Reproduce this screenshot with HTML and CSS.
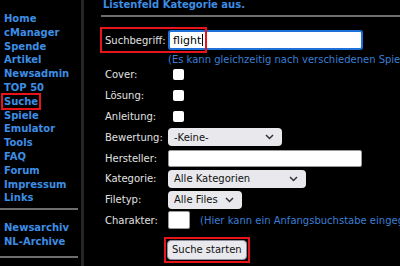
FILE: index.html
```html
<!DOCTYPE html>
<html lang="de">
<head>
    <meta charset="UTF-8">
    <title>Suche</title>
    <link rel="stylesheet" href="styles.css">
</head>
<body>
    <div class="page">
        <div class="nav">
            <ul class="menu">
                <li><a href="#">Home</a></li>
                <li><a href="#">cManager</a></li>
                <li><a href="#">Spende</a></li>
                <li><a href="#">Artikel</a></li>
                <li><a href="#">Newsadmin</a></li>
                <li><a href="#">TOP 50</a></li>
                <li><a href="#" class="mark">Suche</a></li>
                <li><a href="#">Spiele</a></li>
                <li><a href="#">Emulator</a></li>
                <li><a href="#">Tools</a></li>
                <li><a href="#">FAQ</a></li>
                <li><a href="#">Forum</a></li>
                <li><a href="#">Impressum</a></li>
                <li><a href="#">Links</a></li>
            </ul>
            <hr class="nav-line">
            <ul class="menu menu-last">
                <li><a href="#">Newsarchiv</a></li>
                <li><a href="#">NL-Archive</a></li>
            </ul>
            <hr class="nav-line">
        </div>
        <div class="sep"></div>
        <div class="main">
            <p class="intro">Listenfeld Kategorie aus.</p>
            <hr class="main-line">
            <form class="search" onsubmit="return false">
                <label class="lbl" for="q">Suchbegriff:</label>
                <div class="field">
                    <span class="hilite-q"></span>
                    <div class="text-focus" id="q">flight<span class="caret"></span></div>
                </div>

                <div></div>
                <div class="hint hint-q">(Es kann gleichzeitig nach verschiedenen Spielen gesucht werden)</div>

                <label class="lbl" for="cover">Cover:</label>
                <div class="field"><input type="checkbox" id="cover"></div>

                <label class="lbl" for="loesung">Lösung:</label>
                <div class="field"><input type="checkbox" id="loesung"></div>

                <label class="lbl" for="anleitung">Anleitung:</label>
                <div class="field"><input type="checkbox" id="anleitung"></div>

                <label class="lbl" for="bewertung">Bewertung:</label>
                <div class="field">
                    <div class="select w-bew">
                        <select id="bewertung"><option>-Keine-</option></select>
                        <svg width="9" height="6" viewBox="0 0 9 6"><path d="M1 1l3.5 3.5L8 1" fill="none" stroke="#333" stroke-width="1.5"/></svg>
                    </div>
                </div>

                <label class="lbl" for="hersteller">Hersteller:</label>
                <div class="field"><input type="text" class="text w-long" id="hersteller"></div>

                <label class="lbl" for="kategorie">Kategorie:</label>
                <div class="field">
                    <div class="select w-kat">
                        <select id="kategorie"><option>Alle Kategorien</option></select>
                        <svg width="9" height="6" viewBox="0 0 9 6"><path d="M1 1l3.5 3.5L8 1" fill="none" stroke="#333" stroke-width="1.5"/></svg>
                    </div>
                </div>

                <label class="lbl" for="filetyp">Filetyp:</label>
                <div class="field">
                    <div class="select w-file">
                        <select id="filetyp"><option>Alle Files</option></select>
                        <svg width="9" height="6" viewBox="0 0 9 6"><path d="M1 1l3.5 3.5L8 1" fill="none" stroke="#333" stroke-width="1.5"/></svg>
                    </div>
                </div>

                <label class="lbl" for="charakter">Charakter:</label>
                <div class="field">
                    <input type="text" class="text w-char" id="charakter">
                    <span class="hint hint-char">(Hier kann ein Anfangsbuchstabe eingegeben werden)</span>
                </div>

                <div></div>
                <div class="field submit-row">
                    <span class="hilite-btn"><button type="submit">Suche starten</button></span>
                </div>
            </form>
        </div>
    </div>
</body>
</html>
```

FILE: styles.css
```css
body {
    margin: 0;
    background-color: #000;
    font-family: "DejaVu Sans", Verdana, sans-serif;
    font-size: 10px;
    overflow: hidden;
}
.page {
    display: flex;
    min-height: 266px;
}
.nav {
    width: 78px;
    padding-top: 12px;
    flex-shrink: 0;
}
.menu {
    list-style: none;
    margin: 0;
    padding: 0 0 0 4px;
}
.menu-last {
    margin-bottom: 7px;
}
.menu li {
    line-height: 13.8px;
}
.menu a {
    color: #3d8ee4;
    font-weight: bold;
    text-decoration: none;
}
.menu a.mark {
    outline: 2px solid #e8141b;
    outline-offset: 1px;
}
.nav-line {
    border: none;
    border-top: 2px solid #6e6e6e;
    margin: 3px 0 11px 0;
}
.sep {
    width: 3px;
    background-color: #262626;
    margin-left: 3px;
    flex-shrink: 0;
}
.main {
    flex: 1;
    padding-left: 21px;
    white-space: nowrap;
    overflow: hidden;
}
.intro {
    margin: -1px 0 0 -2px;
    color: #3d8ee4;
    font-weight: bold;
    line-height: 12px;
}
.main-line {
    border: none;
    border-top: 2px solid #6e6e6e;
    margin: 4px 0 0 -4px;
}
.search {
    display: grid;
    grid-template-columns: 63px auto;
    grid-template-rows: 20px 14.5px;
    grid-auto-rows: 20.8px;
    align-items: center;
    margin-top: 13px;
}
.lbl {
    color: #e2e2e2;
}
.field {
    position: relative;
    display: flex;
    align-items: center;
}
.text-focus {
    width: 195px;
    height: 20px;
    box-sizing: border-box;
    border: 2px solid #1f6fd8;
    border-radius: 3px;
    background-color: #fff;
    color: #000;
    font-size: 11px;
    padding-left: 3px;
    display: flex;
    align-items: center;
}
.caret {
    width: 1px;
    height: 12px;
    background-color: #000;
    margin-left: 1px;
}
.hilite-q {
    position: absolute;
    left: -68px;
    top: -3px;
    width: 103px;
    height: 22px;
    border: 2px solid #e8141b;
    pointer-events: none;
}
.hint {
    color: #3a7fd6;
}
.hint-q {
    align-self: end;
}
.hint-char {
    margin-left: 10px;
}
input[type="checkbox"] {
    appearance: none;
    width: 11px;
    height: 11px;
    margin: 0 0 0 5px;
    background-color: #fff;
    border-radius: 2px;
}
.text {
    height: 17px;
    box-sizing: border-box;
    border: 1px solid #9a9a9a;
    border-radius: 2px;
    background-color: #fff;
    margin: 0;
}
.w-long {
    width: 194px;
}
.w-char {
    width: 22px;
    height: 18px;
}
.select {
    display: flex;
    align-items: center;
    justify-content: space-between;
    height: 18px;
    box-sizing: border-box;
    background-color: #e9e9ed;
    border-radius: 4px;
    padding: 0 8px 0 6px;
}
.select select {
    appearance: none;
    border: none;
    background: transparent;
    font-family: "DejaVu Sans", Verdana, sans-serif;
    font-size: 10px;
    color: #111;
    padding: 0;
    margin: 0;
}
.w-bew {
    width: 114px;
}
.w-kat {
    width: 138px;
}
.w-file {
    width: 74px;
}
.submit-row {
    height: 32px;
    align-self: start;
    align-items: flex-end;
}
.hilite-btn {
    display: inline-block;
    margin-left: -4px;
    padding: 1px;
    border: 2px solid #e8141b;
}
button {
    display: block;
    font-family: "DejaVu Sans", Verdana, sans-serif;
    font-size: 10px;
    color: #111;
    background-color: #e9e9ed;
    border: 1px solid #8f8f9d;
    border-radius: 4px;
    height: 20px;
    padding: 0 4px;
}
```
